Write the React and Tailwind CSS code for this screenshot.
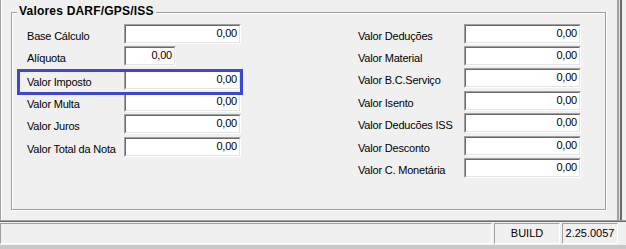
import React from 'react';

const leftRows = [
  { label: 'Base Cálculo', h: 'h-[22px]', w: 'w-[117px]' },
  { label: 'Alíquota', h: 'h-[24px]', w: 'w-[52px]' },
  { label: 'Valor Imposto', h: 'h-[22px]', w: 'w-[117px]' },
  { label: 'Valor Multa', h: 'h-[22px]', w: 'w-[117px]' },
  { label: 'Valor Juros', h: 'h-[23px]', w: 'w-[117px]' },
  { label: 'Valor Total da Nota', h: 'h-[20px]', w: 'w-[117px]' },
];

const rightRows = [
  { label: 'Valor Deduções', h: 'h-[22px]' },
  { label: 'Valor Material', h: 'h-[22px]' },
  { label: 'Valor B.C.Serviço', h: 'h-[23px]' },
  { label: 'Valor Isento', h: 'h-[22px]' },
  { label: 'Valor Deducões ISS', h: 'h-[23px]' },
  { label: 'Valor Desconto', h: 'h-[22px]' },
  { label: 'Valor C. Monetária', h: 'h-[20px]' },
];

function Campo({ w = 'w-[117px]' }) {
  return (
    <div className={`${w} h-[20px] shrink-0 border border-t-[#a0a0a0] border-l-[#a0a0a0] border-b-white border-r-white`}>
      <div className="h-full bg-white border border-t-[#696969] border-l-[#696969] border-b-[#e3e3e3] border-r-[#e3e3e3] text-right pr-[2px] pt-[1px] leading-[13px]">
        0,00
      </div>
    </div>
  );
}

export default function App() {
  return (
    <div
      className="w-[626px] h-[249px] overflow-hidden bg-[#f0f0f0] text-black text-[11px] tracking-[-0.2px] select-none"
      style={{ fontFamily: '"Liberation Sans", Arial, sans-serif' }}
    >
      {/* area principal */}
      <div className="h-[222px] flex border-b border-b-[#696969] shadow-[inset_0_-1px_0_#a0a0a0]">
        <div className="w-[617px] h-[220px] border-l border-l-[#a0a0a0] shadow-[inset_1px_0_0_#fff] pt-[12px] pl-[10px]">
          <div className="relative w-[595px] h-[198px] border border-[#a0a0a0] shadow-[inset_1px_1px_0_#fff,1px_1px_0_#fff]">
            <div className="absolute top-[-9px] left-[5px] px-[2px] bg-[#f0f0f0] font-bold text-[12px] tracking-[0.2px] leading-[14px]">
              Valores DARF/GPS/ISS
            </div>

            <div className="flex pt-[11px] pl-[15px]">
              <div className="w-[331px] flex flex-col">
                {leftRows.map((r) => (
                  <div key={r.label} className={`${r.h} flex items-start`}>
                    <div className="w-[97px] pt-[6px] leading-[13px] whitespace-nowrap">{r.label}</div>
                    <Campo w={r.w} />
                  </div>
                ))}
              </div>
              <div className="flex flex-col">
                {rightRows.map((r) => (
                  <div key={r.label} className={`${r.h} flex items-start`}>
                    <div className="w-[106px] pt-[6px] leading-[13px] whitespace-nowrap">{r.label}</div>
                    <Campo />
                  </div>
                ))}
              </div>
            </div>

            {/* destaque azul */}
            <div className="absolute left-[5px] top-[56px] w-[226px] h-[26px] border-[3px] border-[#3f48cc]" />
          </div>
        </div>
        <div className="h-[220px] flex">
          <div className="w-[2px] bg-[#a0a0a0]" />
          <div className="w-[1px] bg-[#e3e3e3]" />
          <div className="w-[2px] bg-[#696969]" />
        </div>
      </div>

      {/* barra de status */}
      <div className="h-[23px] flex gap-[2px] pt-[1px] pr-[8px]">
        <div className="flex-1 h-[21px] border border-t-[#a0a0a0] border-l-[#a0a0a0] border-b-white border-r-white" />
        <div className="w-[66px] h-[21px] border border-t-[#a0a0a0] border-l-[#a0a0a0] border-b-white border-r-white text-center pt-[3px] leading-[13px] tracking-normal">
          BUILD
        </div>
        <div className="w-[56px] h-[21px] border border-t-[#a0a0a0] border-l-[#a0a0a0] border-b-white border-r-white text-center pt-[3px] leading-[13px] tracking-normal">
          2.25.0057
        </div>
      </div>
      <div className="h-[4px] bg-[#c8c8c8]" />
    </div>
  );
}
